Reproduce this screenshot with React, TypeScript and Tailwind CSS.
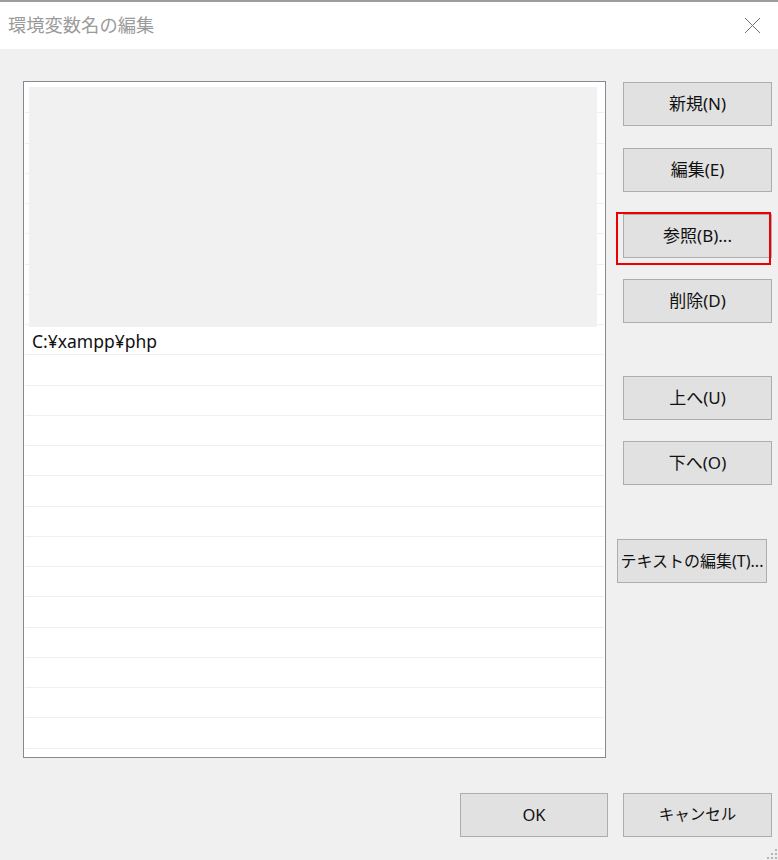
import React from 'react'

const font = "font-['Noto_Sans','Noto_Sans_CJK_JP',sans-serif]"

function WinButton({ label, className = '' }: { label: string; className?: string }) {
  return (
    <button
      className={`h-[44px] bg-[#e1e1e1] border border-[#adadad] text-[#111] flex items-center justify-center ${className}`}
    >
      {label}
    </button>
  )
}

function ResizeGrip() {
  const dots = [
    [9, 1],
    [9, 5],
    [5, 5],
    [9, 9],
    [5, 9],
    [1, 9],
  ]
  return (
    <svg width="12" height="12" viewBox="0 0 12 12" className="absolute right-[0px] bottom-[0px]">
      {dots.map(([x, y], i) => (
        <rect key={i} x={x} y={y} width="2" height="2" fill="#b4b4b4" />
      ))}
    </svg>
  )
}

export default function App() {
  const rows = Array.from({ length: 22 }, (_, i) => (i === 8 ? 'C:¥xampp¥php' : ''))

  return (
    <div className={`w-[778px] h-[860px] flex flex-col bg-[#f0f0f0] relative overflow-hidden ${font}`}>
      {/* Title bar */}
      <div className="h-[2px] bg-[#9c9c9c]" />
      <div className="h-[47px] bg-white flex items-center justify-between pl-[8px] pr-[17px]">
        <span className="text-[18.3px] text-[#9a9a9a] leading-none">環境変数名の編集</span>
        <svg width="17" height="17" viewBox="0 0 17 17">
          <path d="M1 1 L16 16 M16 1 L1 16" stroke="#707070" strokeWidth="1" fill="none" />
        </svg>
      </div>

      {/* Body */}
      <div className="flex gap-[17px] pl-[23px] pt-[32px]">
        {/* List */}
        <div className="w-[583px] h-[677px] border border-[#858991] bg-white px-[1px] pt-[1px] relative">
          {rows.map((text, i) => (
            <div
              key={i}
              className="h-[30.25px] border-b border-[#efefef] flex items-center pl-[7px] text-[17.5px] text-[#111]"
            >
              <span className="pt-[3px]">{text}</span>
            </div>
          ))}
          <div className="absolute left-[5px] top-[5px] w-[568px] h-[240px] bg-[#f1f1f1]" />
        </div>

        {/* Buttons */}
        <div className="w-[149px] flex flex-col pt-[1px]">
          <WinButton label="新規(N)" className="w-[149px] text-[17px]" />
          <WinButton label="編集(E)" className="w-[149px] mt-[22px] text-[17px]" />
          <div className="relative mt-[22px]">
            <WinButton label="参照(B)..." className="w-[149px] text-[17px]" />
            <span className="absolute left-[-7px] top-[-2px] w-[155px] h-[53px] border-2 border-[#ee0000]" />
          </div>
          <WinButton label="削除(D)" className="w-[149px] mt-[21px] text-[17px]" />
          <WinButton label="上へ(U)" className="w-[149px] mt-[53px] text-[17px]" />
          <WinButton label="下へ(O)" className="w-[149px] mt-[21px] text-[17px]" />
          <WinButton
            label="テキストの編集(T)..."
            className="w-[150px] mt-[54px] ml-[-6px] whitespace-nowrap text-[16px]"
          />
        </div>
      </div>

      {/* Footer */}
      <div className="flex gap-[15px] pl-[460px] mt-[35px]">
        <WinButton label="OK" className="w-[148px] text-[16.5px]" />
        <WinButton label="キャンセル" className="w-[149px] text-[15.5px]" />
      </div>

      <ResizeGrip />
    </div>
  )
}
